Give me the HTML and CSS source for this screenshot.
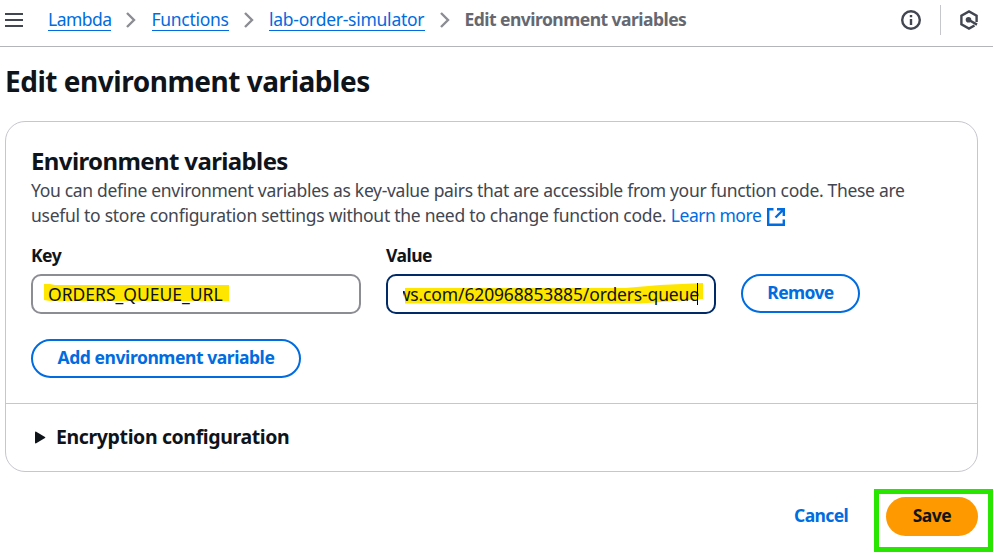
FILE: index.html
```html
<!DOCTYPE html>
<html lang="en">
<head>
<meta charset="utf-8">
<title>Edit environment variables</title>
<link rel="stylesheet" href="styles.css">
</head>
<body>
<header class="topbar">
  <svg class="menu" viewBox="0 0 18 16" width="18" height="16"><path d="M0 2h18M0 8h18M0 14h18"/></svg>
  <nav class="crumbs">
    <a class="crumb c-lambda" href="#">Lambda</a>
    <svg class="chev" viewBox="0 0 10 16" width="10" height="16"><path d="M1 1l7 7-7 7"/></svg>
    <a class="crumb c-functions" href="#">Functions</a>
    <svg class="chev" viewBox="0 0 10 16" width="10" height="16"><path d="M1 1l7 7-7 7"/></svg>
    <a class="crumb c-name" href="#">lab-order-simulator</a>
    <svg class="chev" viewBox="0 0 10 16" width="10" height="16"><path d="M1 1l7 7-7 7"/></svg>
    <span class="current">Edit environment variables</span>
  </nav>
  <div class="tools">
    <svg class="info" viewBox="0 0 20 20" width="20" height="20"><circle cx="10" cy="10" r="8.8"/><path d="M10 9v6M10 5v2.200"/></svg>
    <span class="rule"></span>
    <svg class="hex" viewBox="0 0 20 20" width="20" height="20"><path d="M17.600 12V5.600L10 1.400 2.400 5.600v8.800L10 18.600l5.500-3.100"/><path d="M10 10l8 4.600"/><circle cx="9.500" cy="9.800" r="2.800"/></svg>
  </div>
</header>
<main>
  <h1><span>Edit environment variables</span></h1>
  <section class="card">
    <div class="body">
      <h2>Environment variables</h2>
      <p class="desc"><span class="l1">You can define environment variables as key-value pairs that are accessible from your function code. These are</span><br><span class="l2">useful to store configuration settings without the need to change function code.</span> <a class="learn" href="#">Learn more</a><svg class="ext" viewBox="0 0 18 18" width="18" height="18"><path d="M6.500 1.200H1.200v15.600h15.600V11.500M10 1.200h6.800V8M16.500 1.500L8.500 9.500"/></svg></p>
      <div class="grid">
        <div>
          <label class="label">Key</label>
          <div class="input"><svg class="mark" viewBox="0 0 330 40" width="330" height="40"><path d="M13 10h6l5 1h174v16H19l-6-1z"/></svg><span class="key">ORDERS_QUEUE_URL</span></div>
        </div>
        <div>
          <label class="label value-label">Value</label>
          <div class="input focus"><svg class="mark" viewBox="0 0 330 40" width="330" height="40"><path d="M19 14h220l35-3 43-2v16l-42 3-20 1.500H19z"/></svg><span class="clip"><span class="val">ws.com/620968853885/orders-queue</span></span><i class="caret"></i></div>
        </div>
        <button class="btn remove"><span>Remove</span></button>
      </div>
      <button class="btn add"><span>Add environment variable</span></button>
    </div>
    <div class="expand"><svg viewBox="0 0 11 13" width="11" height="13"><path d="M0 1.500v10q0 1.200 1.200.8l8.800-5.200q.7-.6 0-1.200L1.200.7Q0 .3 0 1.500z"/></svg><h3>Encryption configuration</h3></div>
  </section>
  <footer class="actions">
    <a class="cancel" href="#">Cancel</a>
    <div class="frame"><button class="save"><span>Save</span></button></div>
  </footer>
</main>
</body>
</html>
```
FILE: styles.css
```css
* { box-sizing: border-box; }
body { margin: 0; height: 553px; overflow: hidden; background: #fff; color: #0f141a; font: 17.5px/25px "Noto Sans", sans-serif; }
a { color: #006ce0; text-decoration: none; }
svg { display: block; flex: none; fill: none; stroke: currentColor; }
h1, h2, h3, p { margin: 0; white-space: nowrap; }
button { font: inherit; padding: 0; }
.topbar { display: flex; align-items: center; width: 993px; height: 47px; padding: 0 14px 7px 5px; border-bottom: 1px solid #b4b4bb; color: #424650; }
.menu { stroke-width: 2.2; }
.crumbs { display: flex; align-items: center; margin-left: 25px; white-space: nowrap; }
.crumb { height: 23px; line-height: 23px; border-bottom: 1px solid #006ce0; }
.c-lambda { width: 63px; letter-spacing: -0.5px; }
.c-functions { width: 77px; letter-spacing: -0.3px; }
.c-name { width: 156px; letter-spacing: -0.26px; }
.chev { margin: 0 15.5px 0 15px; color: #8c8c94; stroke-width: 2.4; }
.current { color: #656871; font-weight: 700; letter-spacing: -0.53px; margin-left: -1px; }
.tools { display: flex; align-items: center; margin-left: auto; }
.tools svg { stroke-width: 2.4; }
.rule { width: 1px; height: 30px; margin: 0 18px 0 19px; background: #c6c6cd; }
.hex circle { fill: currentColor; stroke: none; }
h1 { height: 74px; padding: 15px 0 0 5px; font-size: 28px; line-height: 38px; letter-spacing: -0.47px; }
.card { width: 973px; height: 351px; margin-left: 5px; border: 1px solid #c6c6cd; border-radius: 20px; }
.body { height: 282px; padding: 23px 25px 0; border-bottom: 1px solid #c6c6cd; }
h2 { height: 33px; font-size: 24px; line-height: 32px; letter-spacing: -0.62px; }
.desc { color: #424650; }
.l1 { letter-spacing: -0.312px; }
.l2 { letter-spacing: -0.272px; }
.learn { letter-spacing: -0.47px; }
.ext { display: inline-block; vertical-align: -4px; margin-left: 6px; color: #006ce0; stroke-width: 2.4; }
.grid { display: grid; grid-template-columns: 330px 330px 119px; column-gap: 25px; align-items: end; margin-top: 15px; }
.label { display: block; font-weight: 700; margin-bottom: 6px; letter-spacing: -0.5px; }
.value-label { letter-spacing: -0.5px; }
.input { position: relative; display: flex; align-items: center; height: 40px; padding: 0 0 0 15px; border: 2px solid #8c8c94; border-radius: 10px; white-space: nowrap; }
.focus { border-color: #002b66; }
.mark { position: absolute; left: -2px; top: -2px; fill: #ffe600; stroke: none; }
.input span { position: relative; }
.clip { display: flex; justify-content: flex-end; width: 296px; overflow: hidden; }
.val { letter-spacing: -0.14px; }
.caret { position: absolute; left: 309px; top: 7px; width: 1px; height: 22px; background: #000; }
.btn { height: 39px; border: 2px solid #006ce0; border-radius: 20px; background: #fff; color: #006ce0; font-weight: 700; letter-spacing: -0.44px; white-space: nowrap; }
.remove { width: 119px; margin-bottom: 1px; padding-bottom: 2px; letter-spacing: -0.6px; }
.add { display: block; width: 270px; margin-top: 25px; padding-bottom: 2px; }
.expand { display: flex; align-items: center; height: 67px; padding-left: 29px; }
.expand svg { fill: currentColor; stroke: none; }
h3 { margin: -2px 0 0 10px; font-size: 19.5px; letter-spacing: -0.38px; }
.actions { display: flex; justify-content: flex-end; padding: 17px 1px 0 0; }
.cancel { width: 54px; margin: 14px 26px 0 0; font-weight: 700; letter-spacing: -0.6px; }
.frame { width: 119px; height: 63px; padding: 3px 0 0 7px; border: 5px solid #29e600; }
.save { display: block; width: 92px; height: 39px; padding-bottom: 2px; border: 0; border-radius: 20px; background: #f90; color: #0f141a; font-weight: 700; letter-spacing: -0.5px; }
```
